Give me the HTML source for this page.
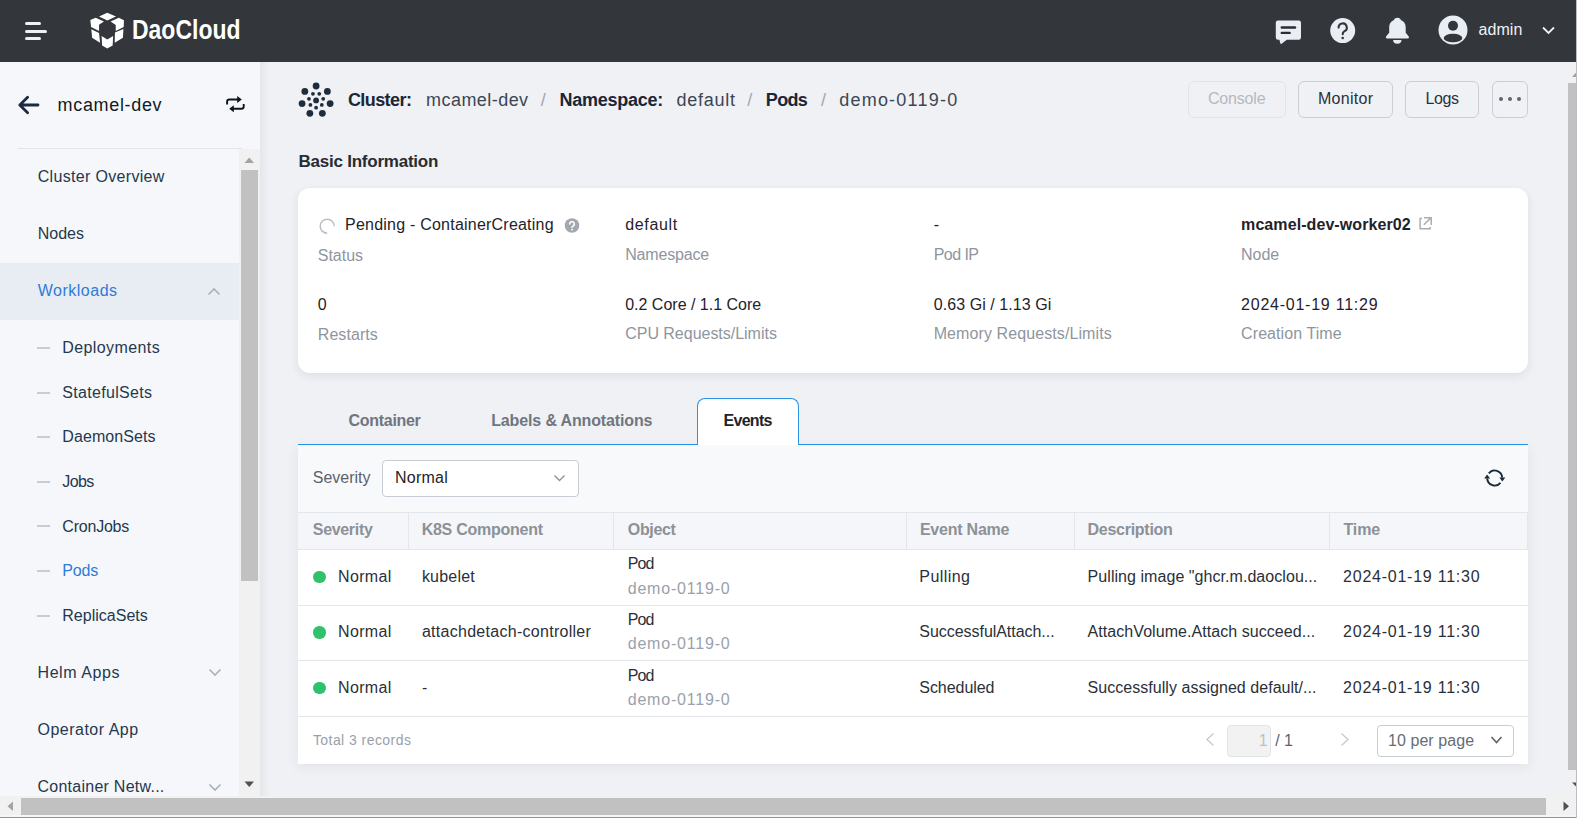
<!DOCTYPE html>
<html><head><meta charset="utf-8">
<style>
*{margin:0;padding:0;box-sizing:border-box}
html,body{width:1577px;height:818px;overflow:hidden;background:#f0f1f5;font-family:"Liberation Sans",sans-serif}
.a{position:absolute;white-space:nowrap;line-height:1}
.b{position:absolute}
.dash{position:absolute;left:37px;width:13px;height:2px;background:#c8cdd5}
.vl{position:absolute;width:1px;background:#e3e6eb}
.hl{position:absolute;height:1px;background:#e3e6eb}
.dot{position:absolute;left:313px;width:12.5px;height:12.5px;border-radius:50%;background:#2fc16b}
.btn{position:absolute;top:81px;height:37px;border:1px solid #c9ced6;border-radius:6px}
svg{position:absolute;overflow:visible}
</style></head><body>

<!-- header -->
<div class="b" style="left:0;top:0;width:1577px;height:62px;background:#33363b"></div>
<div class="b" style="left:25px;top:22px;width:16px;height:3px;border-radius:2px;background:#eef1f6"></div>
<div class="b" style="left:25px;top:30px;width:22px;height:2.5px;border-radius:2px;background:#eef1f6"></div>
<div class="b" style="left:25px;top:37px;width:16px;height:3px;border-radius:2px;background:#eef1f6"></div>
<!-- logo cube -->
<svg style="left:90px;top:12px" width="35" height="37" viewBox="0 0 35 37">
 <g fill="#ffffff">
  <polygon points="9.04,4.42 17.26,0.82 25.98,4.42 17.26,8.53"/>
  <polygon points="0.31,8.01 5.7,5.7 13.92,9.55 9.04,12.63 9.04,19.05 1.08,14.94"/>
  <polygon points="20.6,9.55 28.8,5.7 33.94,8.27 33.69,14.94 25.73,19.05 25.73,12.89"/>
  <polygon points="1.34,17.26 9.04,21.1 10.07,30.86 2.1,25.73"/>
  <polygon points="33.43,17 32.92,25.73 24.7,30.86 24.96,20.59"/>
  <polygon points="11.6,23.93 17.26,27.52 23.16,23.93 22.65,33.43 17.26,36.51 12.12,33.43"/>
 </g>
</svg>
<svg style="left:132px;top:14px" width="110" height="30"><text x="0" y="24.5" font-family="Liberation Sans" font-weight="bold" font-size="27" fill="#ffffff" textLength="108.5" lengthAdjust="spacingAndGlyphs">DaoCloud</text></svg>
<!-- header icons -->
<svg style="left:1275px;top:19px" width="28" height="27" viewBox="0 0 28 27">
 <path d="M3,1.6 H23.8 A2.2,2.2 0 0 1 26,3.8 V18.6 A2.2,2.2 0 0 1 23.8,20.8 H11.8 L6.6,24.8 Q5.6,25.3 5.3,24.2 L4.4,20.8 H3 A2.2,2.2 0 0 1 0.8,18.6 V3.8 A2.2,2.2 0 0 1 3,1.6 Z" fill="#e9edf4"/>
 <rect x="5.6" y="7.3" width="15.6" height="2.4" rx="1.2" fill="#2a2d32"/>
 <rect x="5.6" y="12.7" width="10.2" height="2.4" rx="1.2" fill="#2a2d32"/>
</svg>
<svg style="left:1330px;top:18px" width="26" height="26" viewBox="0 0 26 26">
 <circle cx="12.7" cy="12.6" r="12.5" fill="#e9edf4"/>
 <path d="M8.6,9.6 A4.1,4.1 0 1 1 14.3,13.3 C13.2,13.9 12.7,14.6 12.7,16.2" fill="none" stroke="#33363b" stroke-width="2.1" stroke-linecap="round"/>
 <circle cx="12.7" cy="20" r="1.3" fill="#33363b"/>
</svg>
<svg style="left:1385px;top:17px" width="25" height="28" viewBox="0 0 25 28">
 <path d="M12.4,0.8 C14.5,0.8 15.5,2.2 16,3.2 C19.5,4.5 20.7,7.5 20.7,10.5 V15.7 L23.6,19.3 Q24.6,21.4 22.8,21.4 H2 Q0.2,21.4 1.2,19.3 L4.2,15.7 V10.5 C4.2,7.5 5.4,4.5 8.8,3.2 C9.3,2.2 10.3,0.8 12.4,0.8 Z" fill="#e9edf4"/>
 <path d="M8.1,23.1 H16.5 A4.2,3.6 0 0 1 8.1,23.1 Z" fill="#e9edf4"/>
</svg>
<svg style="left:1438px;top:15px" width="30" height="30" viewBox="0 0 30 30">
 <circle cx="15" cy="15" r="14.5" fill="#e9edf4"/>
 <circle cx="15" cy="10.7" r="5" fill="#33363b"/>
 <ellipse cx="15" cy="23" rx="9.3" ry="4.3" fill="#33363b"/>
</svg>
<svg style="left:1542px;top:26px" width="13" height="9" viewBox="0 0 13 9"><path d="M1,1.5 L6.5,7 L12,1.5" fill="none" stroke="#eef1f6" stroke-width="1.8"/></svg>

<!-- sidebar -->
<div class="b" style="left:0;top:62px;width:260px;height:734px;background:#f5f7fb"></div>
<svg style="left:14px;top:92px" width="28" height="26" viewBox="0 0 28 26"><path d="M24,13 H6.5 M13.6,5.3 L5.8,13 L13.6,20.7" fill="none" stroke="#1b2c40" stroke-width="2.8" stroke-linecap="round" stroke-linejoin="round"/></svg>
<svg style="left:222px;top:92px" width="28" height="24" viewBox="0 0 28 24">
 <path d="M5.1,12.6 V9.8 Q5.1,7.5 7.4,7.5 H16" fill="none" stroke="#0d141c" stroke-width="1.9"/>
 <path d="M15.2,4 L15.2,11 L19.8,7.5 Z" fill="#0d141c"/>
 <path d="M21.7,12 V14.4 Q21.7,16.7 19.4,16.7 H11" fill="none" stroke="#0d141c" stroke-width="1.9"/>
 <path d="M11.8,13.2 L11.8,20.2 L7.2,16.7 Z" fill="#0d141c"/>
</svg>
<div class="b" style="left:18px;top:148px;width:224px;height:1px;background:#e2e5eb"></div>
<div class="b" style="left:0;top:263px;width:239px;height:57px;background:#e8ecf3"></div>
<svg style="left:207px;top:287px" width="14" height="9" viewBox="0 0 14 9"><path d="M1.5,7.5 L7,2 L12.5,7.5" fill="none" stroke="#a9b0ba" stroke-width="1.6"/></svg>
<div class="dash" style="top:347.0px"></div>
<div class="dash" style="top:391.6px"></div>
<div class="dash" style="top:436.2px"></div>
<div class="dash" style="top:480.8px"></div>
<div class="dash" style="top:525.4px"></div>
<div class="dash" style="top:570.0px"></div>
<div class="dash" style="top:614.6px"></div>
<svg style="left:208px;top:668px" width="14" height="9" viewBox="0 0 14 9"><path d="M1.5,1.5 L7,7 L12.5,1.5" fill="none" stroke="#a9b0ba" stroke-width="1.6"/></svg>
<svg style="left:208px;top:783px" width="14" height="9" viewBox="0 0 14 9"><path d="M1.5,1.5 L7,7 L12.5,1.5" fill="none" stroke="#a9b0ba" stroke-width="1.6"/></svg>
<!-- sidebar scrollbar -->
<div class="b" style="left:239px;top:149px;width:21px;height:647px;background:#f1f1f1"></div>
<div class="b" style="left:241px;top:170px;width:17px;height:411px;background:#c1c1c1"></div>
<svg style="left:244px;top:157px" width="11" height="7"><path d="M0.5,6 L5.25,0.5 L10,6 Z" fill="#a3a3a3"/></svg>
<svg style="left:244px;top:781px" width="11" height="7"><path d="M0.5,0.5 L10,0.5 L5.25,6 Z" fill="#505050"/></svg>

<!-- main -->
<div class="b" style="left:260px;top:62px;width:9px;height:734px;background:linear-gradient(to right,#e4e6ea,#f0f1f5)"></div>
<svg style="left:0;top:0" width="1" height="1"><g fill="#1e2d3d"><circle cx="316.10" cy="86.00" r="3.4"/><circle cx="327.36" cy="91.42" r="3.4"/><circle cx="330.14" cy="103.60" r="3.4"/><circle cx="322.35" cy="113.37" r="3.4"/><circle cx="309.85" cy="113.37" r="3.4"/><circle cx="302.06" cy="103.60" r="3.4"/><circle cx="304.84" cy="91.42" r="3.4"/><circle cx="316.10" cy="107.70" r="1.9"/><circle cx="310.39" cy="104.95" r="1.9"/><circle cx="308.98" cy="98.78" r="1.9"/><circle cx="312.93" cy="93.82" r="1.9"/><circle cx="319.27" cy="93.82" r="1.9"/><circle cx="323.22" cy="98.78" r="1.9"/><circle cx="321.81" cy="104.95" r="1.9"/><circle cx="316.10" cy="100.40" r="2.9"/></g></svg>
<!-- buttons -->
<div class="btn" style="left:1188px;width:98px;border-color:#e1e4e9"></div>
<div class="btn" style="left:1298px;width:95px"></div>
<div class="btn" style="left:1405px;width:74px"></div>
<div class="btn" style="left:1492px;width:36px"></div>
<div class="b" style="left:1498.8px;top:97px;width:4px;height:4px;border-radius:50%;background:#5f6670"></div>
<div class="b" style="left:1507.9px;top:97px;width:4px;height:4px;border-radius:50%;background:#5f6670"></div>
<div class="b" style="left:1517px;top:97px;width:4px;height:4px;border-radius:50%;background:#5f6670"></div>

<!-- card -->
<div class="b" style="left:298px;top:188px;width:1230px;height:185px;background:#fff;border-radius:12px;box-shadow:0 3px 10px rgba(20,30,50,0.085)"></div>
<svg style="left:319px;top:218px" width="16" height="16" viewBox="0 0 16 16"><path d="M8.2,15.2 A7,7 0 1 1 15.2,8.2" fill="none" stroke="#b9bec6" stroke-width="1.5"/></svg>
<svg style="left:564px;top:218px" width="16" height="16" viewBox="0 0 16 16">
 <circle cx="8" cy="7.5" r="7.3" fill="#a3a8b0"/>
 <path d="M5.7,6 A2.3,2.3 0 1 1 8.9,8.1 C8.3,8.4 8,8.8 8,9.6" fill="none" stroke="#fff" stroke-width="1.5" stroke-linecap="round"/>
 <circle cx="8" cy="11.6" r="0.95" fill="#fff"/>
</svg>
<svg style="left:1418px;top:217px" width="15" height="14" viewBox="0 0 15 14">
 <path d="M3.9,1.4 H2.1 V11.8 H12.1 V10.1" fill="none" stroke="#a9aeb5" stroke-width="1.5"/>
 <path d="M6,0.8 H13.2 V7.9 M5.8,7.8 L13,0.9" fill="none" stroke="#a9aeb5" stroke-width="1.5"/>
</svg>

<!-- panel -->
<div class="b" style="left:298px;top:445px;width:1230px;height:319px;background:#f8f9fb;box-shadow:0 3px 12px rgba(30,40,60,0.07)"></div>
<!-- tabs -->
<div class="b" style="left:298px;top:444px;width:1230px;height:1px;background:#2b93e4"></div>
<div class="b" style="left:697px;top:398px;width:102px;height:47px;background:#fff;border:1px solid #2b93e4;border-bottom:none;border-radius:8px 8px 0 0"></div>


<div class="b" style="left:381.5px;top:460px;width:197px;height:37px;background:#fff;border:1px solid #c8cdd5;border-radius:4px"></div>
<svg style="left:553px;top:474px" width="13" height="9" viewBox="0 0 13 9"><path d="M1.5,1.5 L6.5,6.5 L11.5,1.5" fill="none" stroke="#8c939d" stroke-width="1.4"/></svg>
<svg style="left:1480px;top:464px" width="30" height="28" viewBox="0 0 30 28">
 <path d="M8.79,9.38 A7.5,7.5 0 0 1 22.2,13.6" fill="none" stroke="#1a2a3c" stroke-width="1.9"/>
 <path d="M20.45,18.82 A7.5,7.5 0 0 1 7.2,14.4" fill="none" stroke="#1a2a3c" stroke-width="1.9"/>
 <path d="M19.4,13.4 L25.3,13.4 L22.3,17.4 Z" fill="#1a2a3c"/>
 <path d="M4.2,14.6 L10.1,14.6 L7.1,10.6 Z" fill="#1a2a3c"/>
</svg>
<!-- table -->
<div class="b" style="left:298px;top:512px;width:1230px;height:37px;background:#f5f6f9"></div>
<div class="hl" style="left:298px;top:512px;width:1230px"></div>
<div class="hl" style="left:298px;top:549px;width:1230px"></div>
<div class="vl" style="left:408px;top:512px;height:37px"></div>
<div class="vl" style="left:613px;top:512px;height:37px"></div>
<div class="vl" style="left:906px;top:512px;height:37px"></div>
<div class="vl" style="left:1074px;top:512px;height:37px"></div>
<div class="vl" style="left:1329px;top:512px;height:37px"></div>
<div class="vl" style="left:1527px;top:512px;height:37px"></div>
<div class="b" style="left:298px;top:550px;width:1230px;height:214px;background:#fff"></div>
<div class="hl" style="left:298px;top:605px;width:1230px"></div>
<div class="hl" style="left:298px;top:660px;width:1230px"></div>
<div class="hl" style="left:298px;top:716px;width:1230px"></div>
<div class="dot" style="top:570.5px"></div>
<div class="dot" style="top:626.3px"></div>
<div class="dot" style="top:681.6px"></div>
<!-- pagination -->
<svg style="left:1205px;top:732px" width="11" height="16" viewBox="0 0 11 16"><path d="M8.5,1.5 L2,7.5 L8.5,13.5" fill="none" stroke="#c8ccd2" stroke-width="1.4"/></svg>
<div class="b" style="left:1227px;top:725px;width:44px;height:32px;background:#f2f2f3;border:1px solid #e1e4e9;border-radius:4px"></div>
<svg style="left:1340px;top:732px" width="11" height="16" viewBox="0 0 11 16"><path d="M1.5,1.5 L8,7.5 L1.5,13.5" fill="none" stroke="#c8ccd2" stroke-width="1.4"/></svg>
<div class="b" style="left:1377px;top:725px;width:137px;height:32px;background:#fff;border:1px solid #c8cdd5;border-radius:4px"></div>
<svg style="left:1490px;top:735px" width="13" height="10" viewBox="0 0 13 10"><path d="M1.5,2 L6.5,7.5 L11.5,2" fill="none" stroke="#5d636b" stroke-width="1.6"/></svg>

<!-- right vertical scrollbar -->
<div class="b" style="left:1566px;top:62px;width:11px;height:735px;background:#f1f1f1"></div>
<div class="b" style="left:1568px;top:83px;width:9px;height:687px;background:#c1c1c1"></div>
<svg style="left:1572px;top:71.5px" width="10" height="6"><path d="M0,5 L4.5,0 L9,5 Z" fill="#a3a3a3"/></svg>
<svg style="left:1572px;top:781.5px" width="10" height="6"><path d="M0,0.5 L9,0.5 L4.5,5 Z" fill="#505050"/></svg>
<!-- bottom scrollbar -->
<div class="b" style="left:0;top:796px;width:1577px;height:19px;background:#f1f1f1"></div>
<div class="b" style="left:21px;top:798px;width:1525px;height:17px;background:#c1c1c1"></div>
<svg style="left:7px;top:801px" width="7" height="11"><path d="M6,0.5 V10 L0.5,5.25 Z" fill="#a3a3a3"/></svg>
<svg style="left:1563px;top:801px" width="7" height="11"><path d="M0.5,0.5 V10 L6,5.25 Z" fill="#505050"/></svg>
<div class="b" style="left:0;top:815px;width:1577px;height:1.5px;background:#f7f7f7"></div>
<div class="b" style="left:0;top:816.5px;width:1577px;height:2px;background:#8e9196"></div>
<div class="b" style="left:1576px;top:0;width:1px;height:818px;background:#babec4"></div>

<div class="a" style="left:1478.4px;top:21.86px;font-size:16px;color:#eef1f6;letter-spacing:0.105px;">admin</div>
<div class="a" style="left:57.6px;top:96.46px;font-size:18px;color:#111a24;letter-spacing:0.663px;">mcamel-dev</div>
<div class="a" style="left:37.7px;top:169.16px;font-size:16px;color:#26384d;letter-spacing:0.326px;">Cluster Overview</div>
<div class="a" style="left:37.7px;top:225.96px;font-size:16px;color:#26384d;letter-spacing:0.012px;">Nodes</div>
<div class="a" style="left:37.7px;top:283.16px;font-size:16px;color:#2f7bd8;letter-spacing:0.513px;">Workloads</div>
<div class="a" style="left:62.3px;top:340.16px;font-size:16px;color:#26384d;letter-spacing:0.403px;">Deployments</div>
<div class="a" style="left:62.3px;top:384.76px;font-size:16px;color:#26384d;letter-spacing:0.320px;">StatefulSets</div>
<div class="a" style="left:62.3px;top:429.36px;font-size:16px;color:#26384d;letter-spacing:0.089px;">DaemonSets</div>
<div class="a" style="left:62.3px;top:473.96px;font-size:16px;color:#26384d;letter-spacing:-0.599px;">Jobs</div>
<div class="a" style="left:62.3px;top:518.56px;font-size:16px;color:#26384d;letter-spacing:-0.212px;">CronJobs</div>
<div class="a" style="left:62.3px;top:563.16px;font-size:16px;color:#2f7bd8;letter-spacing:-0.156px;">Pods</div>
<div class="a" style="left:62.3px;top:607.76px;font-size:16px;color:#26384d;letter-spacing:0.013px;">ReplicaSets</div>
<div class="a" style="left:37.5px;top:664.96px;font-size:16px;color:#26384d;letter-spacing:0.578px;">Helm Apps</div>
<div class="a" style="left:37.5px;top:721.96px;font-size:16px;color:#26384d;letter-spacing:0.493px;">Operator App</div>
<div class="a" style="left:37.5px;top:778.96px;font-size:16px;color:#26384d;letter-spacing:0.254px;">Container Netw...</div>
<div class="a" style="left:347.9px;top:91.06px;font-size:18px;color:#1b2636;font-weight:700;letter-spacing:-0.574px;">Cluster:</div>
<div class="a" style="left:426.1px;top:91.06px;font-size:18px;color:#3b4654;letter-spacing:0.441px;">mcamel-dev</div>
<div class="a" style="left:540.8px;top:91.06px;font-size:18px;color:#a3a7ad;">/</div>
<div class="a" style="left:559.6px;top:91.06px;font-size:18px;color:#1b2636;font-weight:700;letter-spacing:-0.262px;">Namespace:</div>
<div class="a" style="left:676.4px;top:91.06px;font-size:18px;color:#3b4654;letter-spacing:0.759px;">default</div>
<div class="a" style="left:747.3px;top:91.06px;font-size:18px;color:#a3a7ad;">/</div>
<div class="a" style="left:765.8px;top:91.06px;font-size:18px;color:#1b2636;font-weight:700;letter-spacing:-0.672px;">Pods</div>
<div class="a" style="left:820.9px;top:91.06px;font-size:18px;color:#a3a7ad;">/</div>
<div class="a" style="left:839.2px;top:91.06px;font-size:18px;color:#3b4654;letter-spacing:1.227px;">demo-0119-0</div>
<div class="a" style="left:1207.9px;top:91.16px;font-size:16px;color:#b5b9bf;letter-spacing:-0.167px;">Console</div>
<div class="a" style="left:1318.0px;top:91.16px;font-size:16px;color:#2a313a;letter-spacing:0.273px;">Monitor</div>
<div class="a" style="left:1425.4px;top:91.16px;font-size:16px;color:#2a313a;letter-spacing:-0.368px;">Logs</div>
<div class="a" style="left:298.4px;top:153.01px;font-size:17px;color:#262c33;font-weight:700;letter-spacing:-0.225px;">Basic Information</div>
<div class="a" style="left:345.1px;top:217.46px;font-size:16px;color:#1f2329;letter-spacing:0.219px;">Pending - ContainerCreating</div>
<div class="a" style="left:625.2px;top:217.16px;font-size:16px;color:#1f2329;letter-spacing:0.659px;">default</div>
<div class="a" style="left:933.7px;top:217.16px;font-size:16px;color:#1f2329;">-</div>
<div class="a" style="left:1241.1px;top:217.16px;font-size:16px;color:#1f2329;font-weight:700;letter-spacing:0.078px;">mcamel-dev-worker02</div>
<div class="a" style="left:317.8px;top:247.96px;font-size:16px;color:#8f959d;letter-spacing:-0.032px;">Status</div>
<div class="a" style="left:625.2px;top:246.76px;font-size:16px;color:#8f959d;letter-spacing:-0.172px;">Namespace</div>
<div class="a" style="left:933.7px;top:246.76px;font-size:16px;color:#8f959d;letter-spacing:-0.546px;">Pod IP</div>
<div class="a" style="left:1241.1px;top:246.76px;font-size:16px;color:#8f959d;letter-spacing:-0.083px;">Node</div>
<div class="a" style="left:317.8px;top:297.46px;font-size:16px;color:#1f2329;">0</div>
<div class="a" style="left:625.2px;top:297.46px;font-size:16px;color:#1f2329;letter-spacing:-0.004px;">0.2 Core / 1.1 Core</div>
<div class="a" style="left:933.7px;top:297.46px;font-size:16px;color:#1f2329;letter-spacing:0.074px;">0.63 Gi / 1.13 Gi</div>
<div class="a" style="left:1241.1px;top:297.46px;font-size:16px;color:#1f2329;letter-spacing:0.757px;">2024-01-19 11:29</div>
<div class="a" style="left:317.8px;top:326.76px;font-size:16px;color:#8f959d;letter-spacing:0.060px;">Restarts</div>
<div class="a" style="left:625.2px;top:326.46px;font-size:16px;color:#8f959d;letter-spacing:-0.019px;">CPU Requests/Limits</div>
<div class="a" style="left:933.7px;top:326.46px;font-size:16px;color:#8f959d;letter-spacing:0.093px;">Memory Requests/Limits</div>
<div class="a" style="left:1241.1px;top:326.46px;font-size:16px;color:#8f959d;letter-spacing:0.076px;">Creation Time</div>
<div class="a" style="left:348.6px;top:412.86px;font-size:16px;color:#6f7680;font-weight:700;letter-spacing:-0.309px;">Container</div>
<div class="a" style="left:491.2px;top:412.86px;font-size:16px;color:#6f7680;font-weight:700;letter-spacing:-0.135px;">Labels &amp; Annotations</div>
<div class="a" style="left:723.5px;top:412.96px;font-size:16px;color:#1f2329;font-weight:700;letter-spacing:-0.714px;">Events</div>
<div class="a" style="left:312.8px;top:470.06px;font-size:16px;color:#5b626b;letter-spacing:-0.028px;">Severity</div>
<div class="a" style="left:395.0px;top:470.06px;font-size:16px;color:#1f2329;letter-spacing:0.247px;">Normal</div>
<div class="a" style="left:312.8px;top:521.96px;font-size:16px;color:#8c9198;font-weight:700;letter-spacing:-0.324px;">Severity</div>
<div class="a" style="left:421.7px;top:521.96px;font-size:16px;color:#8c9198;font-weight:700;letter-spacing:-0.263px;">K8S Component</div>
<div class="a" style="left:627.8px;top:521.96px;font-size:16px;color:#8c9198;font-weight:700;letter-spacing:-0.359px;">Object</div>
<div class="a" style="left:919.9px;top:521.96px;font-size:16px;color:#8c9198;font-weight:700;letter-spacing:-0.222px;">Event Name</div>
<div class="a" style="left:1087.5px;top:521.96px;font-size:16px;color:#8c9198;font-weight:700;letter-spacing:-0.262px;">Description</div>
<div class="a" style="left:1343.4px;top:521.96px;font-size:16px;color:#8c9198;font-weight:700;letter-spacing:-0.088px;">Time</div>
<div class="a" style="left:338.1px;top:568.56px;font-size:16px;color:#2a3038;letter-spacing:0.328px;">Normal</div>
<div class="a" style="left:421.9px;top:568.56px;font-size:16px;color:#2a3038;letter-spacing:0.218px;">kubelet</div>
<div class="a" style="left:627.7px;top:556.06px;font-size:16px;color:#2a3038;letter-spacing:-0.834px;">Pod</div>
<div class="a" style="left:627.7px;top:580.66px;font-size:16px;color:#9aa1ab;letter-spacing:0.802px;">demo-0119-0</div>
<div class="a" style="left:919.3px;top:568.56px;font-size:16px;color:#2a3038;letter-spacing:0.445px;">Pulling</div>
<div class="a" style="left:1087.6px;top:568.56px;font-size:16px;color:#2a3038;letter-spacing:0.054px;">Pulling image &quot;ghcr.m.daoclou...</div>
<div class="a" style="left:1343.1px;top:568.56px;font-size:16px;color:#2a3038;letter-spacing:0.757px;">2024-01-19 11:30</div>
<div class="a" style="left:338.1px;top:624.36px;font-size:16px;color:#2a3038;letter-spacing:0.328px;">Normal</div>
<div class="a" style="left:421.9px;top:624.36px;font-size:16px;color:#2a3038;letter-spacing:0.283px;">attachdetach-controller</div>
<div class="a" style="left:627.7px;top:611.86px;font-size:16px;color:#2a3038;letter-spacing:-0.834px;">Pod</div>
<div class="a" style="left:627.7px;top:636.46px;font-size:16px;color:#9aa1ab;letter-spacing:0.802px;">demo-0119-0</div>
<div class="a" style="left:919.3px;top:624.36px;font-size:16px;color:#2a3038;letter-spacing:-0.042px;">SuccessfulAttach...</div>
<div class="a" style="left:1087.6px;top:624.36px;font-size:16px;color:#2a3038;letter-spacing:0.058px;">AttachVolume.Attach succeed...</div>
<div class="a" style="left:1343.1px;top:624.36px;font-size:16px;color:#2a3038;letter-spacing:0.757px;">2024-01-19 11:30</div>
<div class="a" style="left:338.1px;top:680.16px;font-size:16px;color:#2a3038;letter-spacing:0.328px;">Normal</div>
<div class="a" style="left:421.9px;top:680.16px;font-size:16px;color:#2a3038;">-</div>
<div class="a" style="left:627.7px;top:667.66px;font-size:16px;color:#2a3038;letter-spacing:-0.834px;">Pod</div>
<div class="a" style="left:627.7px;top:692.26px;font-size:16px;color:#9aa1ab;letter-spacing:0.802px;">demo-0119-0</div>
<div class="a" style="left:919.3px;top:680.16px;font-size:16px;color:#2a3038;letter-spacing:-0.053px;">Scheduled</div>
<div class="a" style="left:1087.6px;top:680.16px;font-size:16px;color:#2a3038;letter-spacing:0.038px;">Successfully assigned default/...</div>
<div class="a" style="left:1343.1px;top:680.16px;font-size:16px;color:#2a3038;letter-spacing:0.757px;">2024-01-19 11:30</div>
<div class="a" style="left:312.9px;top:733.45px;font-size:14px;color:#9aa0a8;letter-spacing:0.441px;">Total 3 records</div>
<div class="a" style="left:1258.8px;top:733.16px;font-size:16px;color:#bcbfc4;">1</div>
<div class="a" style="left:1275.3px;top:733.16px;font-size:16px;color:#5d636b;letter-spacing:-0.148px;">/ 1</div>
<div class="a" style="left:1387.9px;top:733.16px;font-size:16px;color:#666d77;letter-spacing:0.089px;">10 per page</div>
</body></html>
